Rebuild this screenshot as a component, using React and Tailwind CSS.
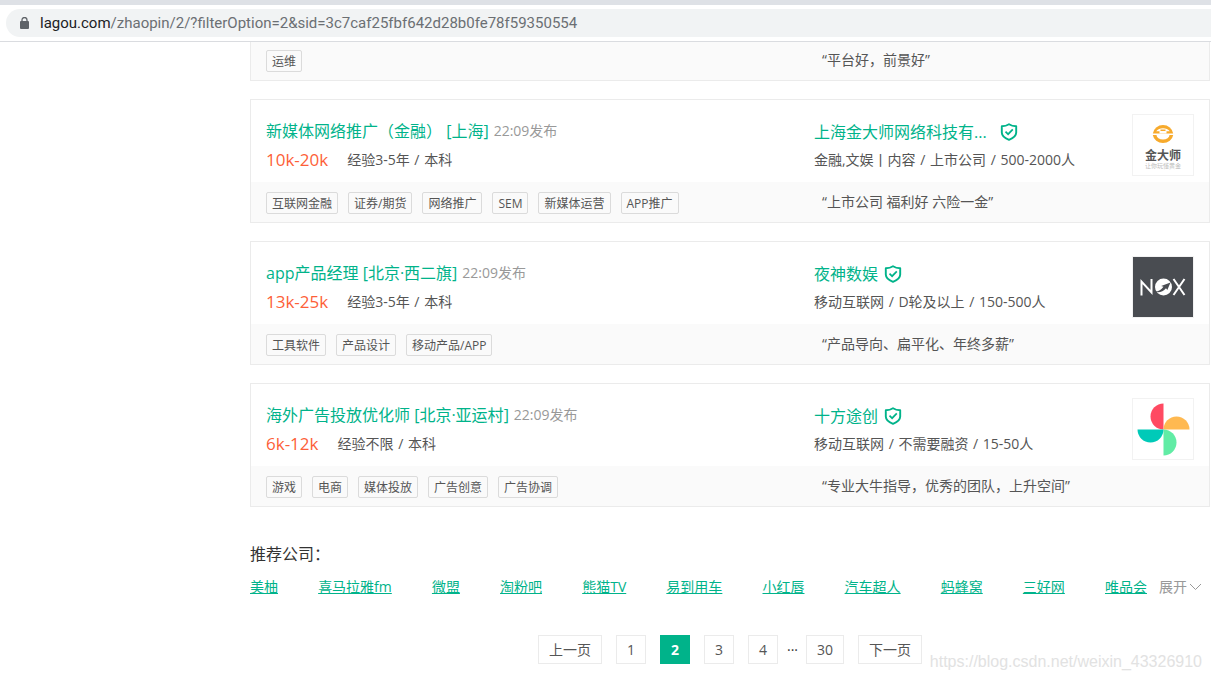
import React from "react";

const jobs = [
  {
    title: "新媒体网络推广（金融）",
    place: "上海",
    time: "22:09发布",
    salary: "10k-20k",
    demand: ["经验3-5年", "本科"],
    company: "上海金大师网络科技有...",
    industry: ["金融,文娱丨内容", "上市公司", "500-2000人"],
    tags: ["互联网金融", "证券/期货", "网络推广", "SEM", "新媒体运营", "APP推广"],
    pitch: "“上市公司 福利好 六险一金”",
    nameWidth: "w-[180px]",
    Logo: MasterLogo,
  },
  {
    title: "app产品经理",
    place: "北京·西二旗",
    time: "22:09发布",
    salary: "13k-25k",
    demand: ["经验3-5年", "本科"],
    company: "夜神数娱",
    industry: ["移动互联网", "D轮及以上", "150-500人"],
    tags: ["工具软件", "产品设计", "移动产品/APP"],
    pitch: "“产品导向、扁平化、年终多薪”",
    Logo: NoxLogo,
  },
  {
    title: "海外广告投放优化师",
    place: "北京·亚运村",
    time: "22:09发布",
    salary: "6k-12k",
    demand: ["经验不限", "本科"],
    company: "十方途创",
    industry: ["移动互联网", "不需要融资", "15-50人"],
    tags: ["游戏", "电商", "媒体投放", "广告创意", "广告协调"],
    pitch: "“专业大牛指导，优秀的团队，上升空间”",
    Logo: PinwheelLogo,
  },
];

const companies = ["美柚", "喜马拉雅fm", "微盟", "淘粉吧", "熊猫TV", "易到用车", "小红唇", "汽车超人", "蚂蜂窝", "三好网", "唯品会"];

function MasterLogo() {
  return (
    <div className="flex h-[62px] w-[62px] flex-col items-center border border-[#f2f2f2] bg-white pt-2">
      <svg className="shrink-0" width="22" height="22" viewBox="0 0 22 22" aria-hidden="true">
        <path d="M.8 10.500a10.300 9.800 0 0 1 20.400 0z" fill="#f7aa2c" />
        <path d="M4.200 8.300a8 6.500 0 0 1 13.600 0h-3.300v2.200h-7V8.300z" fill="#fff" />
        <path d="M8.500 6.500h5v1.500h-5z" fill="#f7aa2c" />
        <path d="M.8 12h3.700a6.500 4.500 0 0 0 13 0h3.700a10.300 9.300 0 0 1-20.400 0z" fill="#f7aa2c" />
      </svg>
      <span className="pt-[3px] text-[12px] font-bold leading-[15px] text-[#555]">金大师</span>
      <span className="text-[6px] leading-[7px] text-[#bbb]">让你玩懂黄金</span>
    </div>
  );
}

function NoxLogo() {
  return (
    <div className="flex h-[62px] w-[62px] items-center justify-center border border-[#f2f2f2] bg-[#494c51]">
      <svg width="46" height="20" viewBox="0 0 46 20" aria-label="NOX">
        <g fill="none" stroke="#fff" strokeWidth="2">
          <path d="M1.500 18.500V4.500l10 11V2" />
          <path d="M33.500 2l11 16M44.500 2l-11 16" />
        </g>
        <circle cx="23.500" cy="10" r="8.500" fill="#fff" />
        <path d="M14 14.500c4 .5 7-1.500 9.500-4.700l-2.300-.8 9.300-3.500-3.200 7.500-1.300-1.800c-3 3.300-7 5-12 3.300z" fill="#494c51" />
      </svg>
    </div>
  );
}

function PinwheelLogo() {
  return (
    <div className="h-[62px] w-[62px] border border-[#f2f2f2] bg-white">
      <svg width="60" height="60" viewBox="0 0 60 60" aria-hidden="true">
        <path d="M30.500 4.500v26a13 13 0 0 1 0-26z" fill="#ff4a62" />
        <path d="M30.500 30.500a13 13 0 0 1 26 0z" fill="#ffb951" />
        <path d="M30.500 30.500a13 13 0 0 1 0 26z" fill="#61eca5" />
        <path d="M4.500 30.500h26a13 13 0 0 1-26 0z" fill="#00cab8" />
      </svg>
    </div>
  );
}

function VerifiedIcon() {
  return (
    <svg className="shrink-0" width="18" height="18" viewBox="0 0 18 18" fill="none" stroke="#00b38a" aria-hidden="true">
      <path d="M9 1.200C7 2.500 4.500 3.200 1.800 3.300V9.500c0 3.500 3.200 5.800 7.200 7.400 4-1.600 7.200-3.900 7.200-7.400V3.300C13.500 3.200 11 2.500 9 1.200z" strokeWidth="1.900" strokeLinejoin="round" />
      <path d="M5.500 8.700l2.600 2.500 4.700-4.800" strokeWidth="1.700" />
    </svg>
  );
}

function Facts({ parts }) {
  return parts.map((part, i) => (
    <React.Fragment key={part}>
      {i > 0 && <span className="px-px"> / </span>}
      {part}
    </React.Fragment>
  ));
}

function Tag({ children }) {
  return (
    <li className="h-[22px] rounded-[2px] border border-[#dbdbdb] px-[5px] text-[12px] leading-[22px]">{children}</li>
  );
}

function Strip({ tags, pitch }) {
  return (
    <div className="flex bg-[#fafafa] px-[15px] pb-2 text-[#555]">
      <ul className="flex flex-1 gap-[10px]">
        {tags.map((t) => (
          <Tag key={t}>{t}</Tag>
        ))}
      </ul>
      <p className="w-[380px] pl-2 text-[14px] leading-[20px]">{pitch}</p>
    </div>
  );
}

function JobCard({ job }) {
  const { Logo } = job;
  return (
    <li className="border border-[#ebebeb]">
      <div className="flex justify-between px-[15px] pt-[14px] pb-[6px]">
        <div className="pt-[5px]">
          <div className="flex items-center gap-[5px] leading-6">
            <h3 className="text-[16px] text-[#00b38a]">
              <a href="#job">
                {job.title} [{job.place}]
              </a>
            </h3>
            <span className="text-[14px] text-[#999]">{job.time}</span>
          </div>
          <div className="flex items-center gap-[19px] pt-[5px] leading-6">
            <span className="text-[17px] text-[#fd5f39]">{job.salary}</span>
            <span className="text-[14px] text-[#555]">
              <Facts parts={job.demand} />
            </span>
          </div>
        </div>
        <div className="flex w-[380px] justify-between">
          <div className="pt-[6px]">
            <div className="flex items-center gap-[6px] leading-6">
              <a href="#company" className={`text-[16px] text-[#00b38a] ${job.nameWidth ?? ""}`}>
                {job.company}
              </a>
              <VerifiedIcon />
            </div>
            <p className="pt-1 text-[14px] leading-6 text-[#555]">
              <Facts parts={job.industry} />
            </p>
          </div>
          <Logo />
        </div>
      </div>
      <div className="bg-[#fafafa] pt-[10px]">
        <Strip tags={job.tags} pitch={job.pitch} />
      </div>
    </li>
  );
}

function PageButton({ children }) {
  return (
    <button className="h-[29px] min-w-[30px] border border-[#ebebeb] px-[10px] text-[14px] leading-[27px] text-[#555]">{children}</button>
  );
}

export default function App() {
  return (
    <div className="relative min-h-screen bg-white font-['Open_Sans','Noto_Sans_CJK_SC',sans-serif]">
      <header className="border-b border-[#dadce0] border-t-[5px] border-t-[#dee1e6] py-1 pl-[6px]">
        <div className="flex h-7 items-center gap-[11px] rounded-l-full bg-[#f1f3f4] pl-[14px]">
          <svg width="9" height="12" viewBox="0 0 9 12" aria-hidden="true">
            <rect y="4" width="9" height="8" rx="1" fill="#5f6368" />
            <path d="M2 5V3a2.500 2.500 0 0 1 5 0v2" fill="none" stroke="#5f6368" strokeWidth="1.300" />
          </svg>
          <span className="font-['Roboto',sans-serif] text-[15px] leading-6 text-[#6b6f73]">
            <span className="text-[#202124]">lagou.com</span>/zhaopin/2/?filterOption=2&amp;sid=3c7caf25fbf642d28b0fe78f59350554
          </span>
        </div>
      </header>

      <main className="pr-px pl-[250px]">
        <ul className="flex flex-col gap-[18px]">
          <li className="border border-t-0 border-[#ebebeb]">
            <div className="bg-[#fafafa] pt-2">
              <Strip tags={["运维"]} pitch="“平台好，前景好”" />
            </div>
          </li>
          {jobs.map((job) => (
            <JobCard key={job.title} job={job} />
          ))}
        </ul>

        <section className="pt-[35px]">
          <h2 className="text-[16px] leading-6 text-[#333]">推荐公司：</h2>
          <div className="flex items-center pt-[9px] pr-2 leading-6">
            <ul className="flex flex-1 justify-between text-[14px] text-[#00b38a]">
              {companies.map((c) => (
                <li key={c} className="whitespace-nowrap">
                  <a href="#company" className="underline">
                    {c}
                  </a>
                </li>
              ))}
            </ul>
            <button className="ml-3 flex items-center gap-[2px] text-[14px] text-[#999]">
              展开
              <svg width="13" height="8" viewBox="0 0 13 8" fill="none" stroke="#999" aria-hidden="true">
                <path d="M1 1l5.500 5.500L12 1" />
              </svg>
            </button>
          </div>
        </section>

        <nav className="flex items-center justify-center gap-[14px] pt-9 pb-4" aria-label="分页">
          <PageButton>上一页</PageButton>
          <PageButton>1</PageButton>
          <button className="h-[29px] min-w-[30px] bg-[#00b38a] px-[10px] text-[14px] font-bold leading-[29px] text-white" aria-current="page">
            2
          </button>
          <PageButton>3</PageButton>
          <div className="flex items-center gap-[9px]">
            <PageButton>4</PageButton>
            <span className="w-[10px] text-center text-[14px] text-[#333]">···</span>
            <PageButton>30</PageButton>
          </div>
          <PageButton>下一页</PageButton>
        </nav>
      </main>

      <p className="absolute right-[9px] bottom-[6px] font-['Liberation_Sans',sans-serif] text-[16px] leading-6 text-[#e2e2e2]">
        https://blog.csdn.net/weixin_43326910
      </p>
    </div>
  );
}
